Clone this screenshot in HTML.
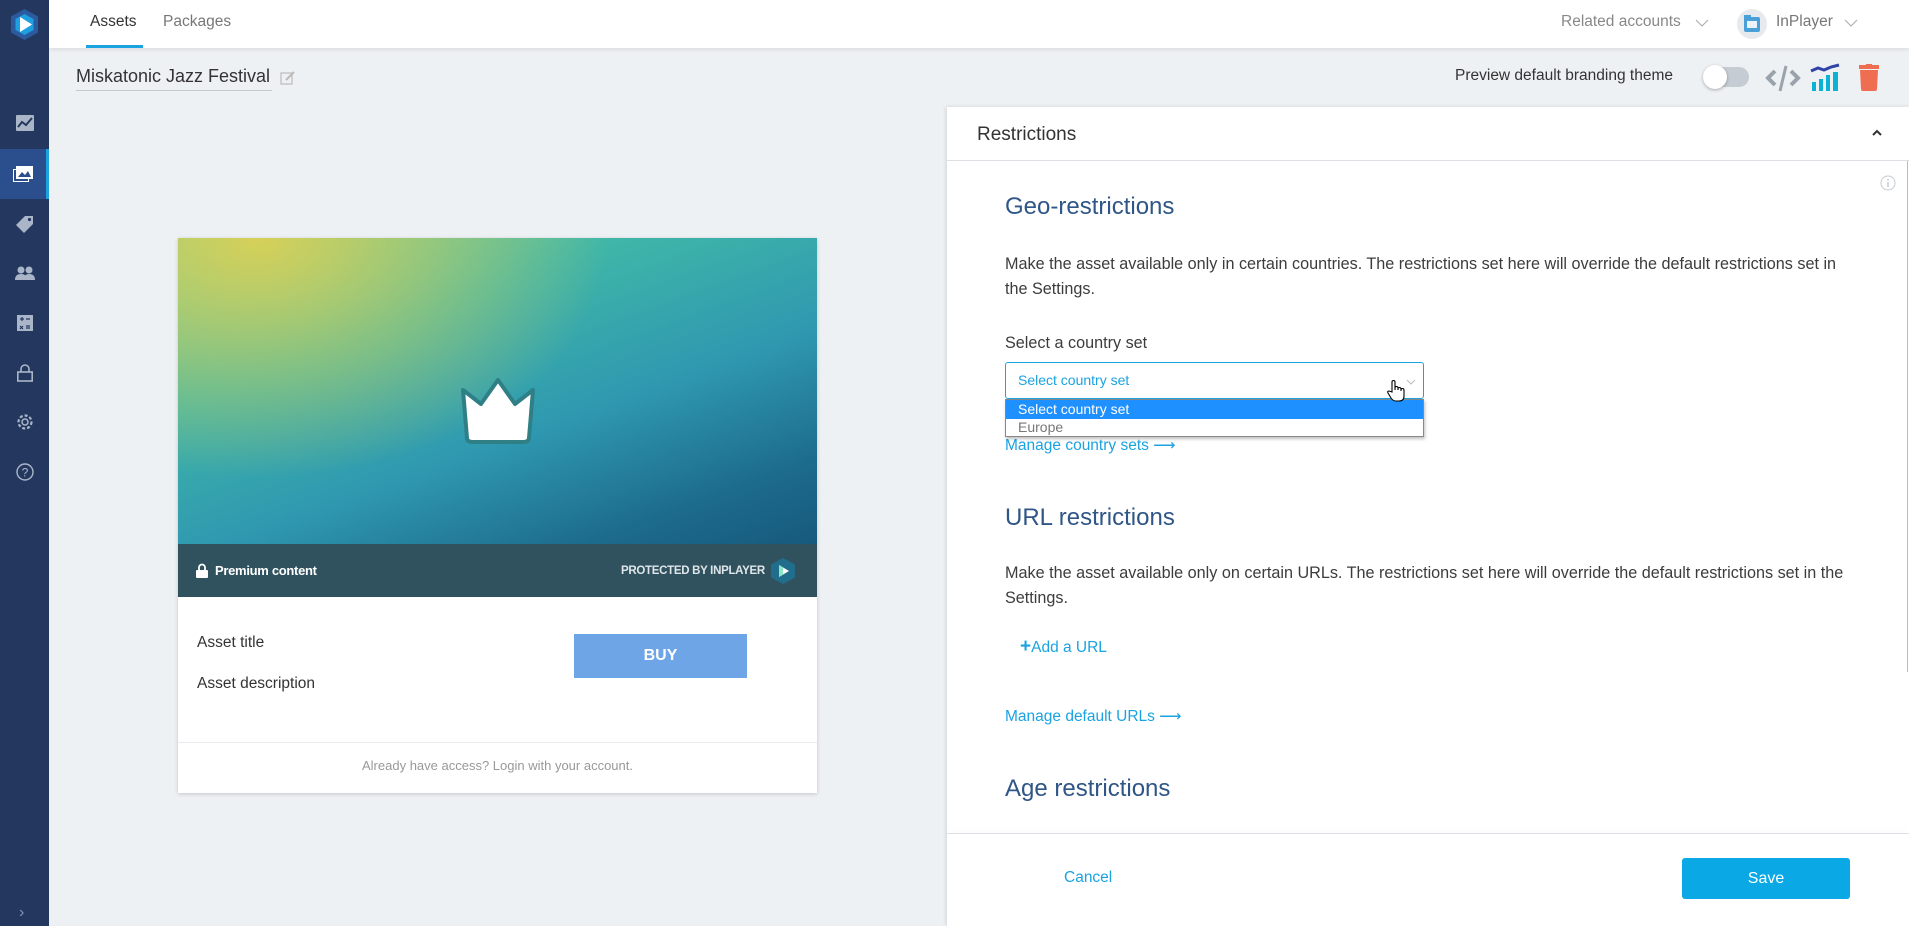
<!DOCTYPE html>
<html><head><meta charset="utf-8"><style>
*{box-sizing:border-box;margin:0;padding:0}
body{width:1909px;height:926px;overflow:hidden;background:#eef1f4;font-family:"Liberation Sans",sans-serif;position:relative;color:#333}
.abs{position:absolute}
#side{left:0;top:0;width:49px;height:926px;background:#24375f}
#top{left:49px;top:0;width:1860px;height:48px;background:#fff;box-shadow:0 2px 4px rgba(0,0,0,.08)}
.si{position:absolute;left:0;width:49px;height:50px;display:flex;align-items:center;justify-content:center}
.card{left:178px;top:238px;width:639px;height:555px;background:#fff;box-shadow:0 1px 4px rgba(0,0,0,.18)}
.img{left:0;top:0;width:639px;height:306px;background:
radial-gradient(ellipse 350px 240px at 80px 0px,rgba(214,208,88,1),rgba(214,208,88,0) 100%),
linear-gradient(160deg,#6dcc9c 0%,#3fb6a8 30%,#2f98b0 60%,#1c6a8c 85%,#175a7e 100%)}
.bar{left:0;top:306px;width:639px;height:53px;background:#30525e}
#panel{left:947px;top:107px;width:962px;height:819px;background:#fff;box-shadow:-1px 0 4px rgba(0,0,0,.12)}
.h2{position:absolute;left:58px;font-size:24px;color:#2f5687}
.p{position:absolute;left:58px;font-size:16.2px;color:#3c3c3c;line-height:25px;width:845px}
.link{position:absolute;font-size:15.5px;color:#1aa3e0}
</style></head><body>
<div id="side" class="abs">
 <svg class="abs" style="left:8px;top:8px" width="33" height="33" viewBox="0 0 33 33"><polygon points="16.5,1 30,8.5 30,24.5 16.5,32 3,24.5 3,8.5" fill="#2c5a9e"/><polygon points="16.5,6 25.5,11 25.5,22 16.5,27 7.5,22 7.5,11" fill="#1e9fe0"/><polygon points="12,9 24,16.5 12,24" fill="#fff"/></svg>
 <div class="si" style="top:98px"><svg width="18" height="16"><rect x="0" y="0" width="18" height="16" rx="1" fill="#aab6c8"/><polyline points="2,12 6,7 10,10 16,3" stroke="#24375f" stroke-width="2" fill="none"/></svg></div>
 <div class="si" style="top:149px;background:#2b4f8c;border-right:3px solid #1aa3e0"><svg width="20" height="16"><rect x="0.5" y="3.5" width="15" height="12" fill="none" stroke="#fff"/><rect x="3" y="0" width="17" height="13" fill="#fff"/><polyline points="5,11 9,6 12,9 15,5 18,11" fill="#2b4f8c"/></svg></div>
 <div class="si" style="top:199px"><svg width="18" height="18"><path d="M9 1 L17 1 L17 9 L8 18 L0 10 Z" fill="#aab6c8"/><circle cx="13.5" cy="4.5" r="1.6" fill="#24375f"/></svg></div>
 <div class="si" style="top:248px"><svg width="20" height="14"><circle cx="6" cy="4" r="3.5" fill="#aab6c8"/><circle cx="14" cy="4" r="3.5" fill="#aab6c8"/><path d="M0 14 Q0 8 6 8 Q12 8 12 14Z M9 14 Q9 8 14 8 Q20 8 20 14Z" fill="#aab6c8"/></svg></div>
 <div class="si" style="top:298px"><svg width="16" height="16"><rect width="16" height="16" fill="#aab6c8"/><path d="M3 4h4M5 2v4M9 4h4M3 11l3 3M6 11l-3 3M9 11h4M9 13h4" stroke="#24375f" stroke-width="1.2"/></svg></div>
 <div class="si" style="top:348px"><svg width="16" height="18"><path d="M4 8V5a4 4 0 0 1 8 0v3" stroke="#aab6c8" stroke-width="1.6" fill="none"/><rect x="0.8" y="8" width="14.4" height="9" fill="none" stroke="#aab6c8" stroke-width="1.6"/></svg></div>
 <div class="si" style="top:397px"><svg width="18" height="18"><circle cx="9" cy="9" r="6.5" stroke="#aab6c8" stroke-width="2.2" fill="none" stroke-dasharray="3 2"/><circle cx="9" cy="9" r="3" stroke="#aab6c8" stroke-width="1.5" fill="none"/></svg></div>
 <div class="si" style="top:447px"><svg width="18" height="18"><circle cx="9" cy="9" r="8" stroke="#aab6c8" stroke-width="1.4" fill="none"/><text x="9" y="13.5" font-size="12" text-anchor="middle" fill="#aab6c8" font-family="Liberation Sans">?</text></svg></div>
 <div class="abs" style="left:19px;top:904px;color:#8796b0;font-size:16px">›</div>
</div>
<div id="top" class="abs">
 <div class="abs" style="left:41px;top:13px;font-size:15.5px;color:#333">Assets</div>
 <div class="abs" style="left:37px;top:45px;width:57px;height:3px;background:#1aa3e0"></div>
 <div class="abs" style="left:114px;top:13px;font-size:15.5px;color:#777">Packages</div>
 <div class="abs" style="left:1512px;top:13px;font-size:15.5px;color:#888">Related accounts</div>
 <svg class="abs" style="left:1646px;top:19px" width="14" height="9"><polyline points="1,1 7,7 13,1" stroke="#aaa" fill="none"/></svg>
 <div class="abs" style="left:1688px;top:9px;width:30px;height:30px;border-radius:50%;background:#e6e9ee"></div>
 <svg class="abs" style="left:1695px;top:15px" width="16" height="17"><rect x="0" y="2" width="16" height="15" rx="2" fill="#4a9fd8"/><rect x="3" y="6" width="10" height="7" fill="#eaf3fb"/><rect x="0" y="0" width="7" height="4" fill="#4a9fd8"/></svg>
 <div class="abs" style="left:1727px;top:13px;font-size:15.5px;color:#777">InPlayer</div>
 <svg class="abs" style="left:1795px;top:19px" width="14" height="9"><polyline points="1,1 7,7 13,1" stroke="#aaa" fill="none"/></svg>
</div>
<div class="abs" style="left:76px;top:66px;font-size:18px;color:#333;border-bottom:1px solid #c4c9d0;padding-bottom:3px;width:196px;white-space:nowrap">Miskatonic Jazz Festival</div>
<svg class="abs" style="left:280px;top:70px" width="16" height="16"><rect x="1" y="3" width="11" height="11" fill="none" stroke="#bbb" stroke-width="1.2"/><path d="M6 10 L14 2" stroke="#bbb" stroke-width="2"/></svg>
<div class="abs" style="left:1455px;top:67px;font-size:15.5px;color:#333">Preview default branding theme</div>
<div class="abs" style="left:1704px;top:67px;width:45px;height:20px;border-radius:10px;background:#c5ccd4"></div>
<div class="abs" style="left:1703px;top:65px;width:24px;height:24px;border-radius:50%;background:#fff;box-shadow:0 1px 3px rgba(0,0,0,.3)"></div>
<svg class="abs" style="left:1765px;top:63px" width="36" height="30"><polyline points="10,8 3,15 10,22" stroke="#9aa3ab" stroke-width="4" fill="none"/><polyline points="26,8 33,15 26,22" stroke="#9aa3ab" stroke-width="4" fill="none"/><line x1="21" y1="3" x2="15" y2="28" stroke="#9aa3ab" stroke-width="3"/></svg>
<svg class="abs" style="left:1810px;top:63px" width="32" height="29"><rect x="2" y="19" width="4" height="9" fill="#0ab3d4"/><rect x="9" y="16" width="4" height="12" fill="#0ab3d4"/><rect x="16" y="12" width="4" height="16" fill="#0ab3d4"/><rect x="23" y="9" width="5" height="19" fill="#0ab3d4"/><polyline points="1,8 8,5 14,7 21,4 29,2" stroke="#3044a8" stroke-width="3" fill="none"/></svg>
<svg class="abs" style="left:1858px;top:64px" width="22" height="28"><rect x="1" y="1" width="20" height="4" fill="#ef6e52"/><rect x="8" y="0" width="6" height="3" fill="#ef6e52"/><path d="M2 6 H20 L19 25 Q19 27 17 27 H5 Q3 27 3 25Z" fill="#ef6e52"/></svg>

<div class="abs card">
 <div class="abs img"></div>
 <svg class="abs" style="left:279px;top:136px" width="82" height="72" viewBox="0 0 82 72"><path d="M6 16 L24 30 L41 6 L58 30 L76 16 L72 64 Q72 68 66 68 H16 Q10 68 10 64 Z" fill="#fff" stroke="#2f7f86" stroke-width="4" stroke-linejoin="round"/></svg>
 <div class="abs bar">
  <svg class="abs" style="left:18px;top:19px" width="12" height="15"><path d="M3 7V4.5a3 3 0 0 1 6 0V7" stroke="#fff" stroke-width="1.8" fill="none"/><rect x="0" y="7" width="12" height="8" rx="1" fill="#fff"/></svg>
  <div class="abs" style="left:37px;top:19px;color:#fff;font-size:13px;font-weight:bold;letter-spacing:-0.3px">Premium content</div>
  <div class="abs" style="left:443px;top:21px;color:#dfe6ea;font-size:11.5px;font-weight:bold;letter-spacing:-0.3px">PROTECTED BY INPLAYER</div>
  <svg class="abs" style="left:591px;top:13px" width="28" height="28" viewBox="0 0 28 28"><polygon points="14,1 26,7.5 26,20.5 14,27 2,20.5 2,7.5" fill="#216d8c"/><polygon points="10,8 20,14 10,20" fill="#fff"/><polygon points="10,8 14,10.5 14,17.5 10,20" fill="#8de6c6"/></svg>
 </div>
 <div class="abs" style="left:19px;top:396px;font-size:15.5px;color:#333">Asset title</div>
 <div class="abs" style="left:19px;top:437px;font-size:15.5px;color:#333">Asset description</div>
 <div class="abs" style="left:396px;top:396px;width:173px;height:44px;background:#6ea5e6;color:#fff;font-weight:bold;font-size:16px;display:flex;align-items:center;justify-content:center">BUY</div>
 <div class="abs" style="left:0;top:504px;width:639px;height:1px;background:#e8eaed"></div>
 <div class="abs" style="left:0;top:520px;width:639px;text-align:center;font-size:13px;color:#999">Already have access? Login with your account.</div>
</div>

<div id="panel" class="abs">
 <div class="abs" style="left:30px;top:17px;font-size:19px;color:#333">Restrictions</div>
 <svg class="abs" style="left:924px;top:21px" width="12" height="9"><polyline points="2,7 6,3 10,7" stroke="#333" stroke-width="2" fill="none"/></svg>
 <div class="abs" style="left:0;top:53px;width:962px;height:1px;background:#dde1e6"></div>
 <svg class="abs" style="left:933px;top:68px" width="16" height="16"><circle cx="8" cy="8" r="7" stroke="#c5cbd2" fill="none"/><rect x="7.3" y="7" width="1.4" height="5" fill="#c5cbd2"/><circle cx="8" cy="4.6" r="0.9" fill="#c5cbd2"/></svg>
 <div class="abs" style="left:960px;top:54px;width:1px;height:511px;background:#bbb"></div>
 <div class="h2" style="top:86px">Geo-restrictions</div>
 <div class="p" style="top:145px">Make the asset available only in certain countries. The restrictions set here will override the default restrictions set in the Settings.</div>
 <div class="p" style="top:224px">Select a country set</div>
 <div class="abs" style="left:58px;top:255px;width:419px;height:37px;border:1px solid #1aa3e0;border-radius:3px"></div>
 <div class="abs" style="left:71px;top:265px;font-size:14px;color:#1aa3e0">Select country set</div>
 <svg class="abs" style="left:459px;top:272px" width="10" height="6"><polyline points="1,1 5,5 9,1" stroke="#bbb" fill="none"/></svg>
 <div class="link" style="left:58px;top:329px">Manage country sets ⟶</div>
 <div class="abs" style="left:58px;top:292px;width:419px;height:38px;background:#fff;border:1px solid #888;box-shadow:1px 2px 3px rgba(0,0,0,.25)">
  <div style="height:19px;background:#1e90ff;color:#fff;font-size:14px;padding-left:12px;line-height:19px">Select country set</div>
  <div style="height:17px;color:#777;font-size:14px;padding-left:12px;line-height:17px">Europe</div>
 </div>
 <svg class="abs" style="left:440px;top:272px" width="20" height="24" viewBox="0 0 20 24"><path d="M5 13 V3 a1.5 1.5 0 0 1 3 0 V11 V9 a1.5 1.5 0 0 1 3 0 V11 V10 a1.5 1.5 0 0 1 3 0 V12 V11 a1.5 1.5 0 0 1 3 0 V17 Q17 22 12 22 H9 Q6 22 4 19 L1 14 Q0 12 2 12 Z" fill="#fff" stroke="#000" stroke-width="1.1"/></svg>
 <div class="h2" style="top:397px">URL restrictions</div>
 <div class="p" style="top:454px">Make the asset available only on certain URLs. The restrictions set here will override the default restrictions set in the Settings.</div>
 <div class="link" style="left:73px;top:532px"><b style="font-size:19px;line-height:10px">+</b>Add a URL</div>
 <div class="link" style="left:58px;top:600px">Manage default URLs ⟶</div>
 <div class="h2" style="top:668px">Age restrictions</div>
 <div class="abs" style="left:0;top:726px;width:962px;height:1px;background:#dde1e6;box-shadow:0 -3px 6px rgba(0,0,0,.06)"></div>
 <div class="link" style="left:117px;top:762px">Cancel</div>
 <div class="abs" style="left:735px;top:751px;width:168px;height:41px;background:#0aa9e6;border-radius:3px;color:#fff;font-size:16px;display:flex;align-items:center;justify-content:center">Save</div>
</div>
</body></html>
